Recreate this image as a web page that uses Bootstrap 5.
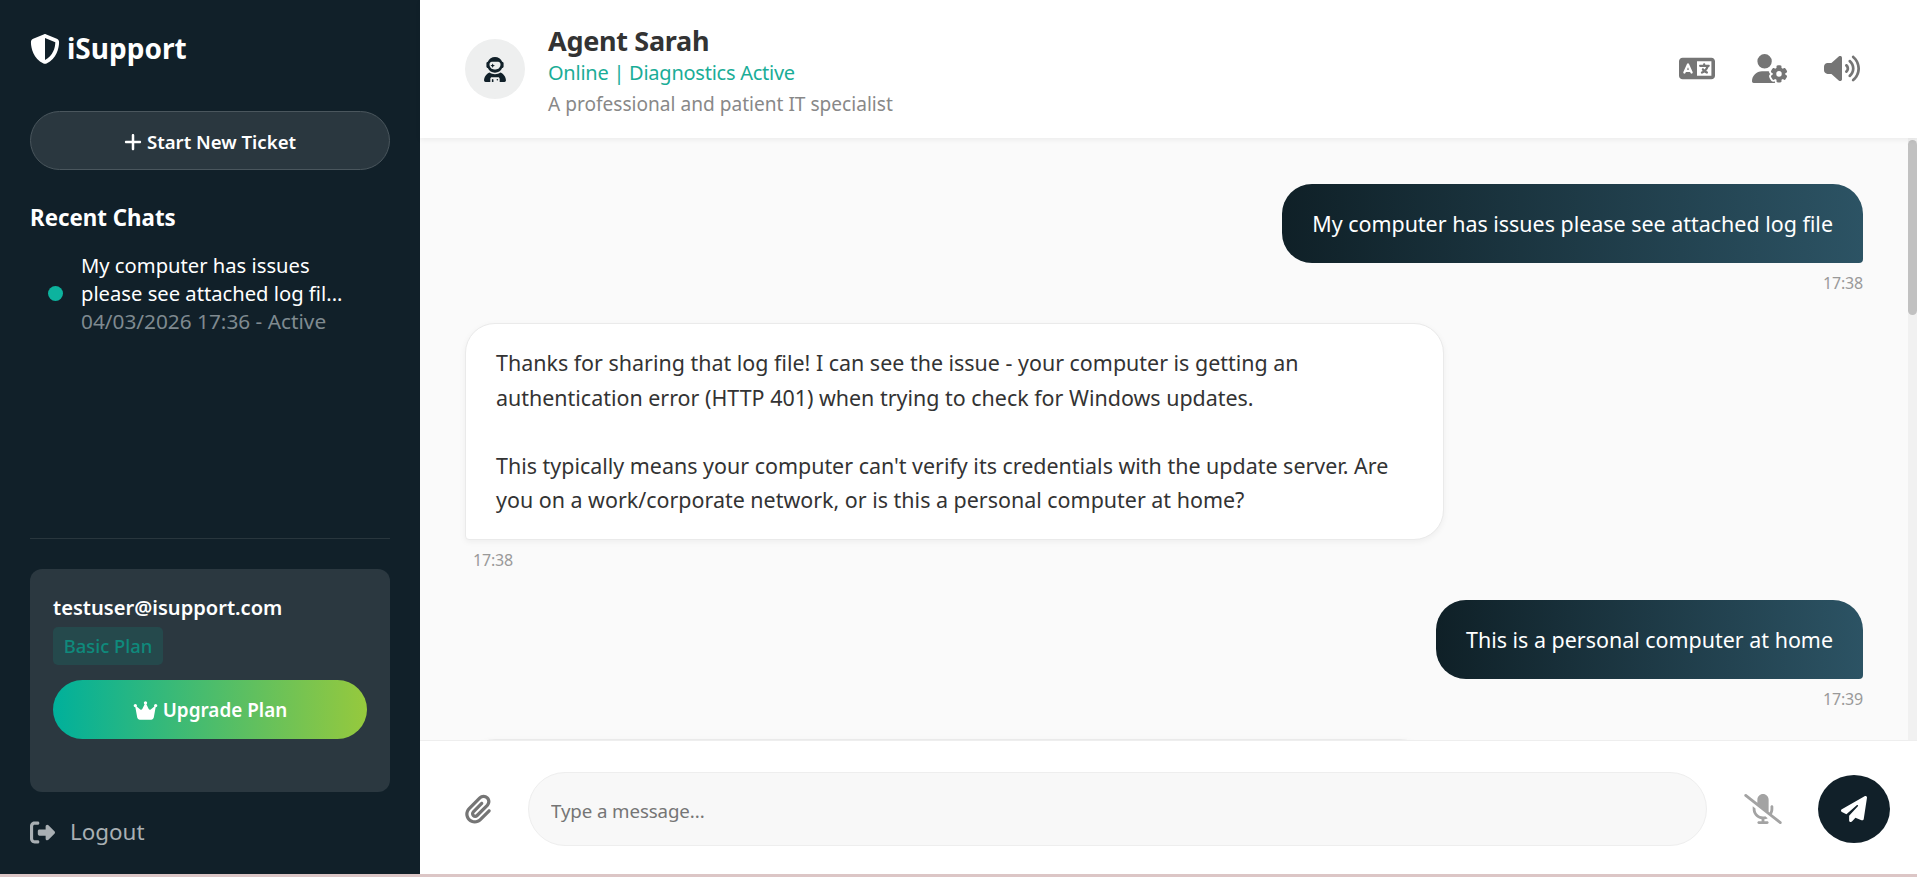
<!DOCTYPE html>
<html lang="en">
<head>
<meta charset="utf-8">
<title>iSupport</title>
<link href="https://cdn.jsdelivr.net/npm/bootstrap@5.3.0/dist/css/bootstrap.min.css" rel="stylesheet">
<style>
html,body{height:100%;margin:0;overflow:hidden}
body{font-family:"Noto Sans","Open Sans",sans-serif;background:#dcc6c6;color:#333}
.shell{height:874px;background:#fff}
.side{width:420px;flex:none;background:#112029;color:#fff;padding:30px 30px 27px}
.logo{font-size:28px;font-weight:700;line-height:37px;gap:7px}
.logo svg{width:30px;height:30px;fill:#fff}
.newbtn{height:59px;margin-top:44px;border-radius:30px;background:#2a373f;border:1px solid #4a565d;color:#fff;font-size:18.6px;font-weight:600;gap:5px;padding-top:8px}
.newbtn svg{width:18px;height:20px;fill:#fff}
.rchead{font-size:22.3px;font-weight:700;line-height:30px;margin-top:33px}
.rcitem{margin-top:18px;padding-left:18px;gap:18px}
.rcdot{width:15px;height:15px;border-radius:50%;background:#0db39e;flex:none}
.rctxt{font-size:20.2px;line-height:28px}
.rcmeta{color:#7f8a90;font-size:20.8px;line-height:28px}
.rule{border-top:1px solid #29363d;margin-bottom:30px}
.ucard{height:223px;background:#2b3840;border-radius:12px;padding:25px 23px 23px}
.uemail{font-size:20.1px;font-weight:600;line-height:28px}
.uplan{display:inline-block;height:38px;line-height:38px;width:110px;text-align:center;margin-top:5px;border-radius:5px;background:#25494c;color:#0f8a7c;font-size:18.4px;font-weight:500}
.upbtn{height:59px;margin-top:15px;border-radius:30px;border:0;background:linear-gradient(90deg,#00b09b,#96c93d);color:#fff;font-size:18.9px;font-weight:600;gap:5px;padding-top:8px}
.upbtn svg{width:25px;height:21px;fill:#fff}
.logout{color:#a9afb3;font-size:22.4px;line-height:30px;margin-top:25px;gap:15px;text-decoration:none}
.logout svg{width:25px;height:25px;fill:#a9afb3}
.chead{height:138px;flex:none;padding:2px 57px 0 45px;background:#fff;box-shadow:0 2px 5px rgba(0,0,0,.06);z-index:2}
.avat{width:60px;height:60px;border-radius:50%;background:#eeefef;flex:none;margin-top:-2px}
.avat svg{width:22px;height:25px;fill:#112029}
.ctxt{margin-left:23px}
.cname{font-size:27px;font-weight:700;line-height:36px;color:#333;letter-spacing:-.3px}
.cstat{font-size:20px;line-height:28px;color:#1aad97;letter-spacing:-.25px}
.cdesc{font-size:19.1px;line-height:28px;color:#888;margin-top:3px}
.hicons{gap:36px;margin-bottom:4px}
.hicons svg{width:36px;height:29px;fill:#757575}
.hicons svg:first-child{margin-right:1px}
.cbody{background:#fafafa;min-height:0;overflow:hidden}
.mlist{padding:46px 45px 0 45px;overflow:hidden;min-width:0}
.bub{font-size:21.45px;line-height:34.3px;padding:23px 30px 22px;border-radius:30px;max-width:979px}
.bme{color:#fff;background:linear-gradient(90deg,#0f2027,#2c5364);border-bottom-right-radius:4px}
.bbot{background:#fff;color:#333;border:1px solid #eaeaea;border-bottom-left-radius:4px;box-shadow:0 2px 6px rgba(0,0,0,.05);padding:22px 30px 21px}
.mtime{font-size:16px;line-height:22px;color:#999;margin-top:9px;margin-bottom:29px;letter-spacing:-.2px}
.tl{padding-left:8px}
.rail{width:9px;flex:none;background:#f1f1f1;padding-top:2px}
.thumb{height:175px;background:#c1c1c1;border-radius:5px}
.cinput{height:134px;flex:none;background:#fff;border-top:1px solid #eee;padding:3px 27px 0 45px}
.clip{width:26px;height:30px;fill:#757575;flex:none}
.fld{height:74px;margin-left:37px;border-radius:37px;background:#f8f8f8;border:1px solid #eee;padding:2px 22px 0;font-size:18.7px;color:#757575;box-shadow:none;letter-spacing:-.1px}
.fld::placeholder{color:#757575}
.mic{width:38px;height:30px;fill:#a3a3a3;flex:none;margin:0 36px 0 37px}
.send{width:72px;height:68px;border-radius:50%;background:#112029;border:0;flex:none}
.send svg{width:26px;height:26px;fill:#fff}
</style>
</head>
<body>
<div class="shell d-flex">
  <aside class="side d-flex flex-column">
    <div class="logo d-flex align-items-center">
      <svg viewBox="0 0 512 512"><path d="M256 0c4.600 0 9.200 1 13.400 2.900L457.700 82.800c22 9.300 38.400 31 38.300 57.200c-.5 99.200-41.300 280.700-213.600 363.200c-16.700 8-36.100 8-52.800 0C57.300 420.700 16.500 239.200 16 140c-.1-26.200 16.300-47.900 38.300-57.200L242.700 2.900C246.800 1 251.400 0 256 0zm0 66.800V444.800C394 378 431.100 230.100 432 141.400L256 66.800z"/></svg>
      <span>iSupport</span>
    </div>
    <button class="btn newbtn d-flex align-items-center justify-content-center w-100">
      <svg viewBox="0 0 448 512"><path d="M256 80c0-17.700-14.300-32-32-32s-32 14.300-32 32V224H48c-17.700 0-32 14.300-32 32s14.300 32 32 32H192V432c0 17.700 14.300 32 32 32s32-14.300 32-32V288H400c17.700 0 32-14.300 32-32s-14.300-32-32-32H256V80z"/></svg>
      <span>Start New Ticket</span>
    </button>
    <div class="rchead">Recent Chats</div>
    <div class="rcitem d-flex align-items-center">
      <span class="rcdot"></span>
      <div>
        <div class="rctxt">My computer has issues<br>please see attached log fil...</div>
        <div class="rcmeta">04/03/2026 17:36 - Active</div>
      </div>
    </div>
    <div class="flex-grow-1"></div>
    <div class="rule"></div>
    <div class="ucard">
      <div class="uemail">testuser@isupport.com</div>
      <span class="uplan">Basic Plan</span>
      <button class="btn upbtn d-flex align-items-center justify-content-center w-100">
        <svg viewBox="0 0 576 512"><path d="M309 106c11.400-7 19-19.700 19-34c0-22.100-17.900-40-40-40s-40 17.900-40 40c0 14.400 7.600 27 19 34L209.700 220.600c-9.100 18.200-32.700 23.400-48.600 10.700L72 160c5-6.700 8-15 8-24c0-22.100-17.900-40-40-40S0 113.900 0 136s17.900 40 40 40c.2 0 .5 0 .7 0L86.400 427.400c5.500 30.400 32 52.600 63 52.600H426.600c30.900 0 57.400-22.100 63-52.600L535.300 176c.2 0 .5 0 .7 0c22.100 0 40-17.900 40-40s-17.900-40-40-40s-40 17.900-40 40c0 9 3 17.300 8 24l-89.100 71.300c-15.900 12.700-39.500 7.500-48.600-10.700L309 106z"/></svg>
        <span>Upgrade Plan</span>
      </button>
    </div>
    <a class="logout d-flex align-items-center" href="#">
      <svg viewBox="0 0 512 512"><path d="M377.900 105.900L500.700 228.700c7.200 7.200 11.300 17.100 11.300 27.300s-4.100 20.100-11.300 27.300L377.900 406.100c-6.400 6.400-15 9.900-24 9.900c-18.700 0-33.900-15.200-33.900-33.900l0-62.100-128 0c-17.700 0-32-14.300-32-32l0-64c0-17.700 14.300-32 32-32l128 0 0-62.100c0-18.700 15.200-33.900 33.900-33.900c9 0 17.600 3.600 24 9.900zM160 96L96 96c-17.700 0-32 14.300-32 32l0 256c0 17.700 14.300 32 32 32l64 0c17.700 0 32 14.300 32 32s-14.300 32-32 32l-64 0c-53 0-96-43-96-96L0 128C0 75 43 32 96 32l64 0c17.700 0 32 14.300 32 32s-14.300 32-32 32z"/></svg>
      <span>Logout</span>
    </a>
  </aside>
  <main class="flex-grow-1 d-flex flex-column" style="min-width:0">
    <header class="chead d-flex align-items-center justify-content-between">
      <div class="d-flex align-items-center">
        <div class="avat d-flex align-items-center justify-content-center">
          <svg viewBox="0 0 448 512"><path d="M370.700 96.100C346.100 39.500 289.700 0 224 0S101.900 39.500 77.300 96.100C60.900 97.500 48 111.200 48 128v64c0 16.800 12.900 30.500 29.300 31.900C101.900 280.500 158.300 320 224 320s122.100-39.500 146.700-96.100c16.400-1.400 29.300-15.100 29.300-31.900V128c0-16.800-12.900-30.500-29.300-31.900zM336 144v16c0 53-43 96-96 96H208c-53 0-96-43-96-96V144c0-26.500 21.500-48 48-48H288c26.500 0 48 21.500 48 48zM189.300 162.700l-6-21.200c-.9-3.300-3.900-5.500-7.300-5.500s-6.400 2.200-7.300 5.500l-6 21.200-21.200 6c-3.300 .9-5.500 3.900-5.500 7.300s2.200 6.400 5.500 7.300l21.200 6 6 21.200c.9 3.300 3.900 5.500 7.300 5.500s6.400-2.200 7.300-5.500l6-21.200 21.200-6c3.300-.9 5.500-3.900 5.500-7.300s-2.200-6.400-5.500-7.300l-21.200-6zM112.700 316.500C46.700 342.600 0 407 0 482.300C0 498.700 13.300 512 29.700 512H128V448c0-17.700 14.300-32 32-32H288c17.700 0 32 14.300 32 32v64l98.300 0c16.400 0 29.700-13.300 29.700-29.700c0-75.300-46.700-139.700-112.700-165.800C303.900 338.800 265.500 352 224 352s-79.900-13.200-111.300-35.500zM176 448c-8.800 0-16 7.200-16 16v48h32V464c0-8.800-7.200-16-16-16zm96 32c8.800 0 16-7.200 16-16s-7.200-16-16-16s-16 7.200-16 16s7.200 16 16 16z"/></svg>
        </div>
        <div class="ctxt">
          <div class="cname">Agent Sarah</div>
          <div class="cstat">Online | Diagnostics Active</div>
          <div class="cdesc">A professional and patient IT specialist</div>
        </div>
      </div>
      <div class="hicons d-flex align-items-center">
        <svg viewBox="0 0 640 512"><path d="M0 128C0 92.700 28.700 64 64 64H256h48 16H576c35.300 0 64 28.700 64 64V384c0 35.300-28.700 64-64 64H320 304 256 64c-35.300 0-64-28.700-64-64V128zm320 0V384H576V128H320zM178.300 175.900c-3.200-7.200-10.400-11.900-18.300-11.900s-15.100 4.700-18.300 11.900l-64 144c-4.500 10.100 .1 21.900 10.200 26.400s21.900-.1 26.400-10.200l8.900-20.100h73.600l8.900 20.100c4.500 10.100 16.300 14.600 26.400 10.200s14.600-16.300 10.200-26.400l-64-144zM160 233.200L179 276H141l19-42.800zM448 164c11 0 20 9 20 20v4h44 16c11 0 20 9 20 20s-9 20-20 20h-2l-1.600 4.500c-8.900 24.400-22.400 46.600-39.600 65.400c.9 .6 1.800 1.100 2.700 1.600l18.900 11.300c9.500 5.700 12.500 18 6.900 27.400s-18 12.500-27.400 6.900l-18.900-11.300c-4.500-2.700-8.800-5.500-13.100-8.500c-10.600 7.500-21.900 14-34 19.400l-3.600 1.600c-10.100 4.500-21.900-.1-26.400-10.200s.1-21.900 10.200-26.400l3.600-1.600c6.400-2.900 12.600-6.100 18.500-9.800l-12.200-12.200c-7.800-7.800-7.800-20.500 0-28.300s20.500-7.800 28.300 0l14.600 14.600 .5 .5c12.400-13.100 22.500-28.300 29.800-45H448 376c-11 0-20-9-20-20s9-20 20-20h52v-4c0-11 9-20 20-20z"/></svg>
        <svg viewBox="0 0 640 512"><path d="M224 0a128 128 0 1 1 0 256A128 128 0 1 1 224 0zM178.300 304h91.400c11.800 0 23.400 1.200 34.500 3.300c-2.100 18.500 7.400 35.600 21.800 44.800c-16.600 10.600-26.700 31.600-20 53.300c4 12.900 9.400 25.500 16.400 37.600s15.200 23.100 24.400 33c15.700 16.900 39.600 18.400 57.200 8.700v.9c0 9.200 2.700 18.500 7.900 26.300H29.700C13.300 512 0 498.700 0 482.300C0 383.800 79.800 304 178.300 304zM436 218.200c0-7 4.500-13.300 11.300-14.800c10.500-2.400 21.500-3.700 32.700-3.700s22.200 1.300 32.700 3.700c6.800 1.500 11.300 7.800 11.300 14.800v30.600c7.900 3.400 15.400 7.700 22.300 12.800l24.900-14.300c6.100-3.500 13.700-2.700 18.500 2.400c7.600 8.100 14.300 17.200 20.100 27.200s10.300 20.400 13.500 31c2.100 6.700-1.100 13.700-7.200 17.200l-25 14.400c.4 4 .7 8.100 .7 12.300s-.2 8.200-.7 12.300l25 14.400c6.100 3.500 9.200 10.500 7.200 17.200c-3.300 10.600-7.800 21-13.500 31s-12.500 19.100-20.100 27.200c-4.800 5.100-12.500 5.900-18.500 2.400l-24.900-14.300c-6.900 5.100-14.300 9.400-22.300 12.800l0 30.600c0 7-4.500 13.300-11.300 14.800c-10.500 2.400-21.500 3.700-32.700 3.700s-22.200-1.300-32.700-3.700c-6.800-1.500-11.300-7.800-11.300-14.800V454.800c-8-3.400-15.600-7.700-22.500-12.900l-24.700 14.300c-6.100 3.500-13.700 2.700-18.500-2.400c-7.600-8.100-14.300-17.200-20.100-27.200s-10.300-20.400-13.500-31c-2.100-6.700 1.100-13.700 7.200-17.200l24.800-14.300c-.4-4.100-.7-8.200-.7-12.400s.2-8.300 .7-12.400L343.800 325c-6.100-3.500-9.200-10.500-7.200-17.200c3.300-10.600 7.700-21 13.500-31s12.500-19.100 20.100-27.200c4.800-5.100 12.400-5.900 18.500-2.400l24.800 14.300c6.900-5.100 14.500-9.400 22.500-12.900V218.200zm92.100 133.500a48.100 48.100 0 1 0 -96.100 0 48.100 48.100 0 1 0 96.100 0z"/></svg>
        <svg viewBox="0 0 640 512"><path d="M533.600 32.500C598.500 85.200 640 165.800 640 256s-41.500 170.700-106.400 223.500c-10.300 8.400-25.400 6.800-33.800-3.500s-6.800-25.400 3.500-33.800C557.500 398.200 592 331.200 592 256s-34.500-142.200-88.700-186.300c-10.300-8.400-11.800-23.500-3.500-33.800s23.500-11.800 33.800-3.500zM473.100 107c43.200 35.200 70.900 88.900 70.900 149s-27.700 113.800-70.900 149c-10.300 8.400-25.400 6.800-33.800-3.500s-6.800-25.400 3.500-33.800C475.300 341.300 496 301.100 496 256s-20.700-85.300-53.200-111.800c-10.300-8.400-11.800-23.500-3.500-33.800s23.500-11.800 33.800-3.500zm-60.500 74.500C434.100 199.100 448 225.900 448 256s-13.900 56.900-35.400 74.500c-10.300 8.400-25.400 6.800-33.800-3.500s-6.800-25.400 3.500-33.800C393.100 284.400 400 271 400 256s-6.900-28.400-17.700-37.300c-10.300-8.400-11.800-23.500-3.500-33.800s23.500-11.800 33.800-3.500zM301.100 34.800C312.600 40 320 51.400 320 64V448c0 12.600-7.400 24-18.900 29.200s-25 3.100-34.400-5.300L131.800 352H64c-35.300 0-64-28.700-64-64V224c0-35.300 28.700-64 64-64h67.800L266.700 40.100c9.400-8.400 22.900-10.400 34.400-5.300z"/></svg>
      </div>
    </header>
    <div class="cbody flex-grow-1 d-flex">
      <div class="mlist flex-grow-1">
        <div class="d-flex flex-column align-items-end">
          <div class="bub bme">My computer has issues please see attached log file</div>
          <div class="mtime">17:38</div>
        </div>
        <div class="d-flex flex-column align-items-start">
          <div class="bub bbot">Thanks for sharing that log file! I can see the issue - your computer is getting an authentication error (HTTP 401) when trying to check for Windows updates.<br><br>This typically means your computer can't verify its credentials with the update server. Are you on a work/corporate network, or is this a personal computer at home?</div>
          <div class="mtime tl">17:38</div>
        </div>
        <div class="d-flex flex-column align-items-end">
          <div class="bub bme">This is a personal computer at home</div>
          <div class="mtime">17:39</div>
        </div>
        <div class="d-flex flex-column align-items-start">
          <div class="bub bbot" aria-hidden="true" style="width:965px;height:120px"></div>
        </div>
      </div>
      <div class="rail"><div class="thumb"></div></div>
    </div>
    <div class="cinput d-flex align-items-center">
      <svg class="clip" viewBox="0 0 448 512"><path d="M364.200 83.800c-24.400-24.400-64-24.400-88.400 0l-184 184c-42.100 42.100-42.100 110.300 0 152.400s110.300 42.100 152.400 0l152-152c10.900-10.900 28.700-10.900 39.600 0s10.900 28.700 0 39.600l-152 152c-64 64-167.600 64-231.600 0s-64-167.600 0-231.600l184-184c46.300-46.300 121.300-46.300 167.600 0s46.300 121.300 0 167.600l-176 176c-28.600 28.600-75 28.600-103.600 0s-28.600-75 0-103.600l144-144c10.900-10.900 28.700-10.900 39.600 0s10.900 28.700 0 39.600l-144 144c-6.700 6.700-6.700 17.700 0 24.400s17.700 6.700 24.400 0l176-176c24.400-24.400 24.400-64 0-88.400z"/></svg>
      <input class="form-control fld flex-grow-1 w-auto" type="text" placeholder="Type a message...">
      <svg class="mic" viewBox="0 0 640 512"><path d="M38.800 5.100C28.400-3.100 13.300-1.200 5.100 9.200S-1.200 34.700 9.200 42.900l592 464c10.400 8.200 25.500 6.300 33.700-4.100s6.300-25.500-4.100-33.700L472.100 344.700c15.200-26 23.900-56.300 23.900-88.700V216c0-13.300-10.700-24-24-24s-24 10.700-24 24v40c0 21.200-5.100 41.100-14.200 58.700L416 300.800V96c0-53-43-96-96-96s-96 43-96 96v54.300L38.800 5.100zM344 430.400c20.400-2.800 39.700-9.100 57.300-18.200l-43.100-33.900C346.100 382 333.300 384 320 384c-70.700 0-128-57.300-128-128v-8.700L144.700 210c-.5 1.900-.7 3.900-.7 6v40c0 89.100 66.200 162.700 152 174.400V464H248c-13.300 0-24 10.700-24 24s10.700 24 24 24h72 72c13.300 0 24-10.700 24-24s-10.700-24-24-24H344V430.400z"/></svg>
      <button class="send d-flex align-items-center justify-content-center" type="button" aria-label="Send">
        <svg viewBox="0 0 512 512"><path d="M498.100 5.600c10.100 7 15.400 19.100 13.500 31.200l-64 416c-1.500 9.700-7.400 18.200-16 23s-18.900 5.400-28 1.600L284 427.700l-68.500 74.100c-8.900 9.700-22.900 12.900-35.200 8.100S160 493.200 160 480V396.400c0-4 1.500-7.800 4.200-10.700L331.800 202.800c5.800-6.300 5.600-16-.4-22s-15.700-6.400-22-.7L106 360.800 17.700 316.600C7.100 311.300 .3 300.700 0 288.900s5.900-22.800 16.100-28.700l448-256c10.700-6.100 23.900-5.500 34 1.400z"/></svg>
      </button>
    </div>
  </main>
</div>
<script src="https://cdn.jsdelivr.net/npm/bootstrap@5.3.0/dist/js/bootstrap.bundle.min.js"></script>
</body>
</html>
